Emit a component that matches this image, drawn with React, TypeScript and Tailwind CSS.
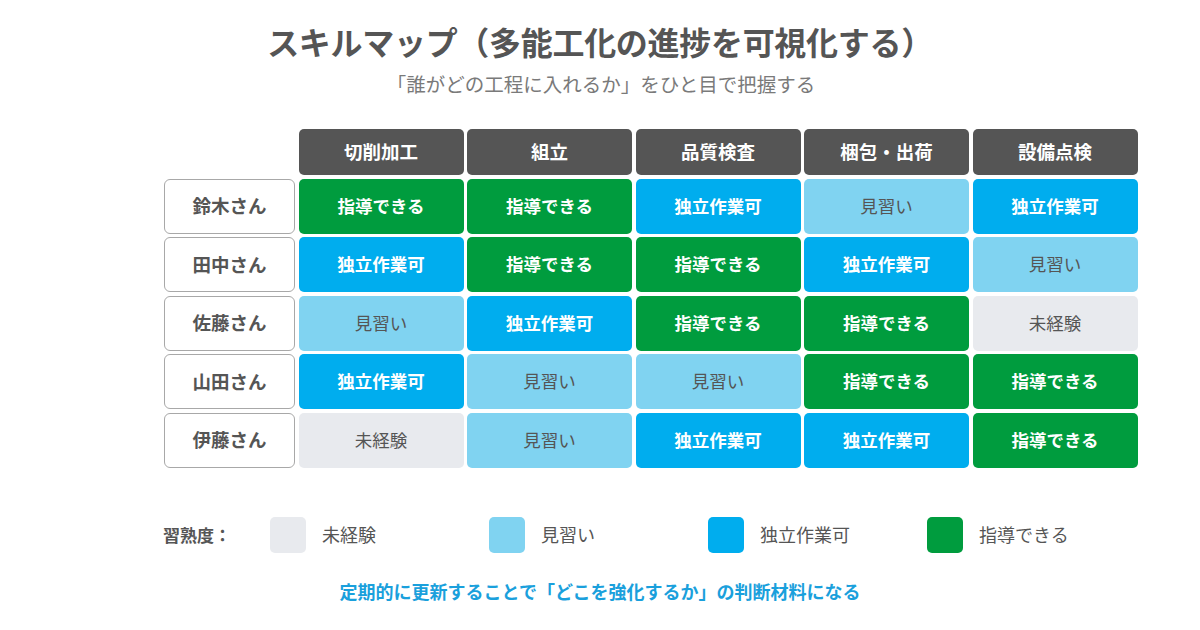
import React from "react";

type Level = 0 | 1 | 2 | 3;

const LABELS = ["未経験", "見習い", "独立作業可", "指導できる"];
const CELL_CLASSES = [
  "bg-[#e8eaee] text-[#555555] font-normal",
  "bg-[#80d3f1] text-[#555555] font-normal",
  "bg-[#00adee] text-white font-bold",
  "bg-[#009c3e] text-white font-bold",
];
const SWATCH = ["bg-[#e8eaee]", "bg-[#80d3f1]", "bg-[#00adee]", "bg-[#009c3e]"];

const processes = ["切削加工", "組立", "品質検査", "梱包・出荷", "設備点検"];
const people: { name: string; levels: Level[] }[] = [
  { name: "鈴木さん", levels: [3, 3, 2, 1, 2] },
  { name: "田中さん", levels: [2, 3, 3, 2, 1] },
  { name: "佐藤さん", levels: [1, 2, 3, 3, 0] },
  { name: "山田さん", levels: [2, 1, 1, 3, 3] },
  { name: "伊藤さん", levels: [0, 1, 2, 2, 3] },
];

const FONT = {
  fontFamily:
    '"Noto Sans CJK JP", "Noto Sans", "Liberation Sans", sans-serif',
};

export default function App() {
  return (
    <div
      className="w-[1200px] h-[630px] bg-white overflow-hidden flex flex-col items-center"
      style={FONT}
    >
      <h1 className="mt-[21px] text-[32px] leading-[40px] font-bold text-[#555555] tracking-[-0.3px]">
        スキルマップ（多能工化の進捗を可視化する）
      </h1>
      <p className="mt-[10px] text-[19.5px] leading-[26px] text-[#7a7a7a] ml-[2px]">
        「誰がどの工程に入れるか」をひと目で把握する
      </p>

      <div className="self-start mt-[32px] ml-[164px] grid grid-cols-[131px_repeat(5,165px)] gap-x-[3.5px] gap-y-[3.5px]">
        <div className="h-[46px]" />
        {processes.map((p) => (
          <div
            key={p}
            className="h-[46px] rounded-[5px] bg-[#555555] text-white font-bold text-[18.5px] flex items-center justify-center"
          >
            {p}
          </div>
        ))}
        {people.map((person) => (
          <React.Fragment key={person.name}>
            <div className="h-[55px] rounded-[6px] border-[1.5px] border-[#a8a8a8] bg-white text-[#555555] font-bold text-[18.5px] flex items-center justify-center">
              {person.name}
            </div>
            {person.levels.map((lv, i) => (
              <div
                key={i}
                className={`h-[55px] rounded-[5px] text-[17.5px] flex items-center justify-center ${CELL_CLASSES[lv]}`}
              >
                {LABELS[lv]}
              </div>
            ))}
          </React.Fragment>
        ))}
      </div>

      <div className="mt-[49px] w-[1200px] flex items-center">
        <div className="ml-[163px] w-[107px] text-[17px] font-bold text-[#555555]">
          習熟度：
        </div>
        {LABELS.map((l, i) => (
          <div key={l} className="w-[219px] flex items-center">
            <div className={`w-[36px] h-[36px] rounded-[5px] ${SWATCH[i]}`} />
            <span className="ml-[16px] text-[18px] text-[#555555]">{l}</span>
          </div>
        ))}
      </div>

      <p className="mt-[25px] text-[18px] font-bold text-[#1aa0dc]">
        定期的に更新することで「どこを強化するか」の判断材料になる
      </p>
    </div>
  );
}
